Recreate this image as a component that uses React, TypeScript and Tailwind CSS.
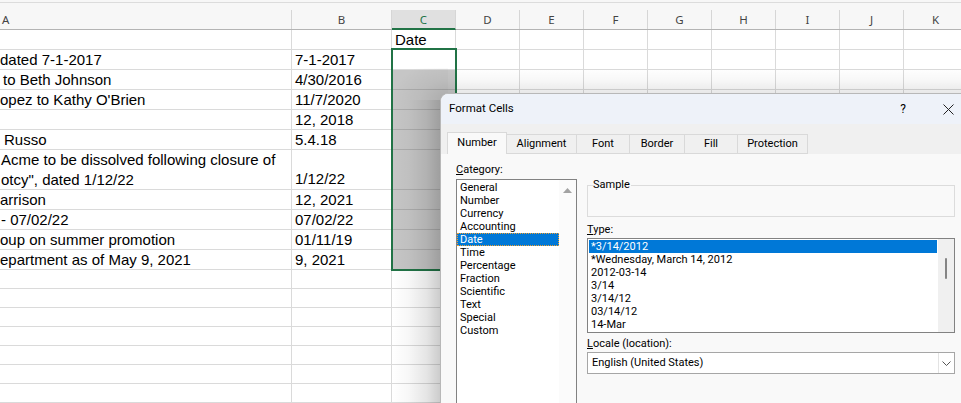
import React from "react";

type Row = {
  h: string;
  a?: React.ReactNode;
  aCls?: string;
  b?: string;
  bBottom?: boolean;
  c?: string;
  sel?: boolean;
};

const rows: Row[] = [
  { h: "h-[20px]", c: "Date" },
  { h: "h-[20px]", a: "dated 7-1-2017", aCls: "pl-[0px]", b: "7-1-2017" },
  { h: "h-[20px]", a: "to Beth Johnson", aCls: "pl-[3px]", b: "4/30/2016", sel: true },
  { h: "h-[20px]", a: "opez to Kathy O'Brien", aCls: "pl-[0px]", b: "11/7/2020", sel: true },
  { h: "h-[20px]", a: "", b: "12, 2018", sel: true },
  { h: "h-[20px]", a: "Russo", aCls: "pl-[4px]", b: "5.4.18", sel: true },
  {
    h: "h-[40px]",
    a: (
      <>
        <div>Acme to be dissolved following closure of</div>
        <div>otcy", dated 1/12/22</div>
      </>
    ),
    aCls: "pl-[1px]",
    b: "1/12/22",
    bBottom: true,
    sel: true,
  },
  { h: "h-[20px]", a: "arrison", aCls: "pl-[0px]", b: "12, 2021", sel: true },
  { h: "h-[20px]", a: "- 07/02/22", aCls: "pl-[1px]", b: "07/02/22", sel: true },
  { h: "h-[20px]", a: "oup on summer promotion", aCls: "pl-[0px]", b: "01/11/19", sel: true },
  { h: "h-[20px]", a: "epartment as of May 9, 2021", aCls: "pl-[0px]", b: "9, 2021", sel: true },
  ...Array.from({ length: 7 }, () => ({ h: "h-[19px]" } as Row)),
];

const rest = ["D", "E", "F", "G", "H", "I", "J", "K"];

const categories = [
  "General",
  "Number",
  "Currency",
  "Accounting",
  "Date",
  "Time",
  "Percentage",
  "Fraction",
  "Scientific",
  "Text",
  "Special",
  "Custom",
];

const types = [
  "*3/14/2012",
  "*Wednesday, March 14, 2012",
  "2012-03-14",
  "3/14",
  "3/14/12",
  "03/14/12",
  "14-Mar",
];

function Sheet() {
  return (
    <div className="font-['Liberation_Sans',Arial,sans-serif] text-[15px] text-black">
      {/* top strip */}
      <div className="h-[2px] bg-[#f7f7f7]" />
      <div className="h-[1px] bg-[#dcdcdc]" />
      <div className="h-[7px] bg-[#f7f7f7]" />
      {/* column headers */}
      <div className="flex h-[20px] bg-[#f7f7f7] border-b border-[#b4b4b4] font-['Noto_Sans',sans-serif] text-[11.5px] text-[#444]">
        <div className="w-[292px] shrink-0 border-r border-[#d6d6d6] pl-[2px] leading-[19px]">A</div>
        <div className="w-[100px] shrink-0 border-r border-[#d6d6d6] text-center leading-[19px]">B</div>
        <div className="w-[64px] shrink-0 -mb-[1px] border-r border-[#d6d6d6] border-b-2 border-b-[#217346] bg-[#e0e0e0] text-center leading-[19px] text-[#217346]">
          C
        </div>
        {rest.map((l) => (
          <div key={l} className="w-[64px] shrink-0 border-r border-[#d6d6d6] text-center leading-[19px]">
            {l}
          </div>
        ))}
      </div>
      {/* rows */}
      {rows.map((r, i) => (
        <div key={i} className={`flex ${r.h}`}>
          <div
            className={`w-[292px] shrink-0 overflow-hidden whitespace-pre border-r border-b border-[#dadada] leading-[20px] ${r.aCls ?? ""}`}
          >
            {r.a}
          </div>
          <div
            className={`w-[100px] shrink-0 flex ${r.bBottom ? "items-end" : "items-start"} border-r border-b border-[#dadada] pl-[3px] leading-[20px]`}
          >
            {r.b}
          </div>
          <div
            className={`w-[64px] shrink-0 border-r border-b pl-[3px] leading-[20px] ${
              r.sel ? "bg-[#c6c6c6] border-[#acacac]" : "border-[#dadada]"
            }`}
          >
            {r.c}
          </div>
          {rest.map((l) => (
            <div key={l} className="w-[64px] shrink-0 border-r border-b border-[#dadada]" />
          ))}
        </div>
      ))}
      {/* selection outline */}
      <div className="absolute left-[391px] top-[48px] w-[66px] h-[223px] border-2 border-[#217346] pointer-events-none" />
    </div>
  );
}

function DialogShadow() {
  return (
    <>
      {/* left soft shadow */}
      <div className="absolute left-[392px] top-[100px] w-[48px] h-[303px] pointer-events-none bg-[linear-gradient(to_right,rgba(0,0,0,0)_0%,rgba(0,0,0,0.03)_35%,rgba(0,0,0,0.1)_72%,rgba(0,0,0,0.2)_100%)]" />
      {/* top soft shadow */}
      <div className="absolute left-[448px] top-[68px] w-[513px] h-[25px] pointer-events-none bg-[linear-gradient(to_bottom,rgba(0,0,0,0)_0%,rgba(0,0,0,0.03)_50%,rgba(0,0,0,0.09)_100%)]" />
      {/* corner */}
      <div className="absolute left-[392px] top-[68px] w-[56px] h-[32px] pointer-events-none bg-[radial-gradient(56px_40px_at_100%_100%,rgba(0,0,0,0.14)_0%,rgba(0,0,0,0.05)_50%,rgba(0,0,0,0)_100%)]" />
    </>
  );
}

function Dialog() {
  return (
    <div className="absolute left-[440px] top-[93px] w-[540px] h-[330px] rounded-t-[8px] border border-[#b8b8b8] bg-[#f9f9f9] overflow-hidden font-['Roboto',sans-serif] text-[11px] text-black">
      {/* title bar */}
      <div className="h-[30px] bg-[#eef2f9] flex items-center">
        <span className="pl-[8px] text-[11.5px]">Format Cells</span>
        <span className="ml-auto w-[44px] text-center text-[12px]">?</span>
        <div className="w-[46px] mr-[8px] flex items-center justify-center">
          <svg width="11" height="11" viewBox="0 0 11 11">
            <path d="M0.5 0.5 L10.5 10.5 M10.5 0.5 L0.5 10.5" stroke="#222" strokeWidth="1" fill="none" />
          </svg>
        </div>
      </div>
      {/* tabs */}
      <div className="h-[30px] bg-[#f0f0f0] flex items-end pl-[6px]">
        <div className="w-[60px] h-[22px] bg-[#f9f9f9] border border-b-0 border-[#d9d9d9] flex items-center justify-center pb-[1px]">
          Number
        </div>
        <div className="w-[70px] h-[20px] border-t border-r border-b border-[#d9d9d9] flex items-center justify-center">
          Alignment
        </div>
        <div className="w-[53px] h-[20px] border-t border-r border-b border-[#d9d9d9] flex items-center justify-center">
          Font
        </div>
        <div className="w-[55px] h-[20px] border-t border-r border-b border-[#d9d9d9] flex items-center justify-center">
          Border
        </div>
        <div className="w-[53px] h-[20px] border-t border-r border-b border-[#d9d9d9] flex items-center justify-center">
          Fill
        </div>
        <div className="w-[70px] h-[20px] border-t border-r border-b border-[#d9d9d9] flex items-center justify-center">
          Protection
        </div>
      </div>
      {/* body */}
      <div className="flex pl-[15px] pt-[9px]">
        {/* category */}
        <div className="w-[121px] shrink-0">
          <div className="h-[13px] leading-[13px]">
            <span className="underline">C</span>ategory:
          </div>
          <div className="mt-[3px] h-[240px] border border-[#828282] bg-white flex">
            <div className="w-[102px] pt-[1px]">
              {categories.map((c) =>
                c === "Date" ? (
                  <div
                    key={c}
                    className="h-[13px] leading-[11px] pl-[2px] bg-[#0078d7] text-white border border-dotted border-[#f0a030]"
                  >
                    {c}
                  </div>
                ) : (
                  <div key={c} className="h-[13px] leading-[13px] pl-[3px]">
                    {c}
                  </div>
                )
              )}
            </div>
            <div className="w-[17px] bg-[#fbfbfb] flex justify-center pt-[8px]">
              <svg width="9" height="5" viewBox="0 0 9 5">
                <path d="M0 5 L4.5 0 L9 5 Z" fill="#a3a3a3" />
              </svg>
            </div>
          </div>
        </div>
        {/* right side */}
        <div className="ml-[10px] w-[368px] shrink-0">
          <div className="relative mt-[22px] h-[32px] border border-[#dcdcdc]">
            <span className="absolute left-[5px] -top-[8px] bg-[#f9f9f9] leading-[13px] pr-[1px]">Sample</span>
          </div>
          <div className="mt-[6px] h-[13px] leading-[13px]">
            <span className="underline">T</span>ype:
          </div>
          <div className="mt-[2px] h-[95px] border border-[#828282] bg-white flex">
            <div className="w-[350px] p-[1px]">
              {types.map((t, i) => (
                <div
                  key={t}
                  className={`h-[13px] leading-[13px] pl-[2px] ${i === 0 ? "bg-[#0078d7] text-white" : ""}`}
                >
                  {t}
                </div>
              ))}
            </div>
            <div className="relative w-[16px] bg-[#f0f0f0]">
              <div className="absolute left-[7px] top-[19px] w-[2px] h-[21px] rounded-full bg-[#858585]" />
            </div>
          </div>
          <div className="mt-[4px] h-[13px] leading-[13px]">
            <span className="underline">L</span>ocale (location):
          </div>
          <div className="mt-[2px] h-[22px] border border-[#a6a6a6] bg-white flex items-center">
            <span className="pl-[4px] flex-1">English (United States)</span>
            <div className="w-[16px] h-full border-l border-[#e3e3e3] flex items-center justify-center">
              <svg width="9" height="5" viewBox="0 0 9 5">
                <path d="M0.5 0.5 L4.5 4.5 L8.5 0.5" stroke="#555" strokeWidth="1" fill="none" />
              </svg>
            </div>
          </div>
        </div>
      </div>
    </div>
  );
}

export default function App() {
  return (
    <div className="relative w-[961px] h-[403px] overflow-hidden bg-white">
      <Sheet />
      <DialogShadow />
      <Dialog />
    </div>
  );
}
